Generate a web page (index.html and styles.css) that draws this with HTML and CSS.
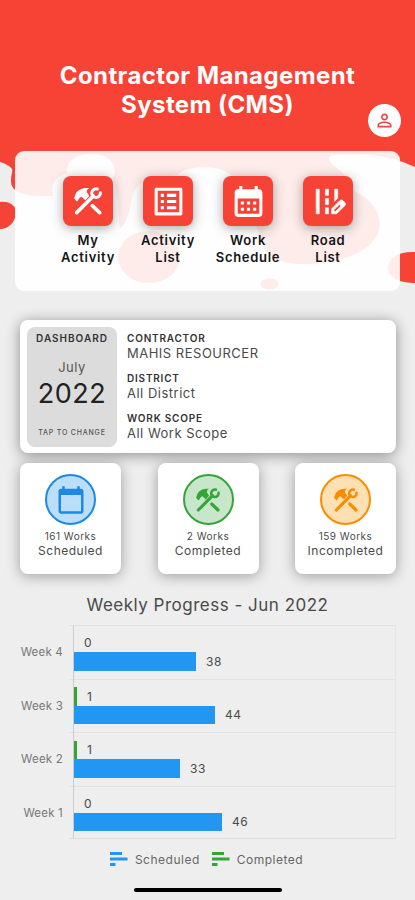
FILE: index.html
```
<!DOCTYPE html>
<html lang="en">
<head>
    <meta charset="UTF-8">
    <meta name="viewport" content="width=device-width, initial-scale=1.0">
    <title>Contractor Management System</title>
    <link rel="stylesheet" href="styles.css">
</head>
<body>
    <!-- Shared icons -->
    <svg class="sprite" width="0" height="0">
        <symbol id="tools" viewBox="0 0 84 84">
            <path d="M0 34L6 18Q18 1 46 3Q37 8 38 15L46 27L34 40L23 29Q17 30 15 35L9 44Z"/>
            <path d="M8 77L58 27M55 56L77 77" fill="none" stroke="currentColor" stroke-width="11" stroke-linecap="round"/>
            <path d="M70 6A13 13 0 1 0 79 17" fill="none" stroke="currentColor" stroke-width="9" stroke-linecap="round"/>
        </symbol>
        <symbol id="bars" viewBox="0 0 18 14">
            <path d="M0 0h12v3H0zM0 5.500h17.500v3H0zM0 11h5.500v3H0z"/>
        </symbol>
    </svg>

    <svg class="backdrop" viewBox="0 0 415 300">
        <path d="M0 0H415V167C405 163 400 160 385 157C365 154 335 153 329 157C328 162 335 167 343 173C350 184 352 192 360 194C375 203 382 217 379 230C373 255 330 265 300 264C280 263 268 258 263 246C255 225 245 180 228 173C215 165 190 166 180 173C175 178 160 176 150 178C135 183 132 195 130 208C128 218 124 226 120 228C118 215 118 190 113 180C120 160 104 154 91 154C75 154 65 163 67 173C54 178 50 185 53 196H35C20 195 10 190 11 180C11 174 13 172 12 169C9 165 4 163 0 162Z"/>
        <path d="M0 202C9 201 16 205 16 213C15 223 8 229 0 229Z"/>
        <path d="M415 252C402 251 388 256 388 268C389 279 402 283 415 283Z"/>
        <ellipse cx="149" cy="257" rx="31" ry="26"/>
        <ellipse cx="269.500" cy="284" rx="9" ry="5.500"/>
    </svg>

    <header class="header">
        <h1>Contractor Management<br>System (CMS)</h1>
        <button class="profile" aria-label="Profile">
            <svg viewBox="0 0 24 24"><path d="M12 5.900c1.160 0 2.100.940 2.100 2.100s-.940 2.100-2.100 2.100S9.900 9.160 9.900 8s.940-2.100 2.100-2.100m0 9c2.970 0 6.100 1.460 6.100 2.100v1.100H5.900V17c0-.640 3.130-2.100 6.100-2.100M12 4C9.790 4 8 5.790 8 8s1.790 4 4 4 4-1.790 4-4-1.790-4-4-4zm0 9c-2.670 0-8 1.340-8 4v3h16v-3c0-2.660-5.330-4-8-4z"/></svg>
        </button>
    </header>

    <nav class="menu">
        <a class="menu-item">
            <span class="tile"><svg class="tools"><use href="#tools"/></svg></span>
            My<br>Activity
        </a>
        <a class="menu-item">
            <span class="tile"><svg viewBox="0 0 24 24"><path d="M19 5v14H5V5h14m1.100-2H3.900c-.5 0-.9.4-.9.9v16.200c0 .4.4.9.9.9h16.200c.4 0 .9-.5.9-.9V3.900c0-.5-.5-.9-.9-.9zM11 7h6v2h-6V7zm0 4h6v2h-6v-2zm0 4h6v2h-6zM7 7h2v2H7zm0 4h2v2H7zm0 4h2v2H7z"/></svg></span>
            Activity<br>List
        </a>
        <a class="menu-item">
            <span class="tile"><svg viewBox="0 0 24 24"><path d="M19 4h-1V2h-2v2H8V2H6v2H5c-1.110 0-1.990.9-1.990 2L3 20c0 1.100.890 2 2 2h14c1.100 0 2-.9 2-2V6c0-1.100-.9-2-2-2zm0 16H5V10h14v10zM9 14H7v-2h2v2zm4 0h-2v-2h2v2zm4 0h-2v-2h2v2zm-8 4H7v-2h2v2zm4 0h-2v-2h2v2zm4 0h-2v-2h2v2z"/></svg></span>
            Work<br>Schedule
        </a>
        <a class="menu-item">
            <span class="tile"><svg viewBox="0 0 24 24"><path d="M18 4h-2v7.900l2-2V4zM4 4h2v16H4zM10 4h2v4h-2zM10 10h2v4h-2zM10 16h2v4h-2zM22.560 12.590l-1.150-1.150c-.590-.590-1.540-.590-2.120 0L14 16.730V20h3.270l5.290-5.290c.590-.590.590-1.540 0-2.120zM16.580 18.450h-1.030v-1.030L19 13.970l1.030 1.030-3.450 3.450z" stroke="currentColor" stroke-width=".4"/></svg></span>
            Road<br>List
        </a>
    </nav>

    <section class="dashboard">
        <div class="period">
            <b>DASHBOARD</b>
            <span class="month">July</span>
            <span class="year">2022</span>
            <small>TAP TO CHANGE</small>
        </div>
        <dl class="details">
            <dt>CONTRACTOR</dt>
            <dd>MAHIS RESOURCER</dd>
            <dt>DISTRICT</dt>
            <dd>All District</dd>
            <dt>WORK SCOPE</dt>
            <dd>All Work Scope</dd>
        </dl>
    </section>

    <section class="stats">
        <div class="stat">
            <span class="circle blue"><svg viewBox="0 0 24 24"><path d="M20 3h-1V1h-2v2H7V1H5v2H4c-1.100 0-2 .9-2 2v16c0 1.100.9 2 2 2h16c1.100 0 2-.9 2-2V5c0-1.100-.9-2-2-2zm0 18H4V8h16v13z"/></svg></span>
            <small>161 Works</small>
            <span>Scheduled</span>
        </div>
        <div class="stat">
            <span class="circle green"><svg class="tools"><use href="#tools"/></svg></span>
            <small>2 Works</small>
            <span>Completed</span>
        </div>
        <div class="stat">
            <span class="circle orange"><svg class="tools"><use href="#tools"/></svg></span>
            <small>159 Works</small>
            <span>Incompleted</span>
        </div>
    </section>

    <h2>Weekly Progress - Jun 2022</h2>
    <div class="chart">
        <div class="week">
            <span class="week-name">Week 4</span>
            <div class="plot">
                <div class="row"><span>0</span></div>
                <div class="row"><i class="bar scheduled" style="width: 122px"></i><span>38</span></div>
            </div>
        </div>
        <div class="week">
            <span class="week-name">Week 3</span>
            <div class="plot">
                <div class="row"><i class="bar completed" style="width: 3px"></i><span>1</span></div>
                <div class="row"><i class="bar scheduled" style="width: 141px"></i><span>44</span></div>
            </div>
        </div>
        <div class="week">
            <span class="week-name">Week 2</span>
            <div class="plot">
                <div class="row"><i class="bar completed" style="width: 3px"></i><span>1</span></div>
                <div class="row"><i class="bar scheduled" style="width: 106px"></i><span>33</span></div>
            </div>
        </div>
        <div class="week">
            <span class="week-name">Week 1</span>
            <div class="plot">
                <div class="row"><span>0</span></div>
                <div class="row"><i class="bar scheduled" style="width: 148px"></i><span>46</span></div>
            </div>
        </div>
    </div>
    <div class="legend">
        <svg class="legend-blue"><use href="#bars"/></svg><span>Scheduled</span>
        <svg class="legend-green"><use href="#bars"/></svg><span>Completed</span>
    </div>
    <div class="home-bar"></div>
</body>
</html>
```
FILE: styles.css
```
* {
  box-sizing: border-box;
}

body {
  margin: 0;
  height: 900px;
  display: flex;
  flex-direction: column;
  position: relative;
  overflow: hidden;
  background: #eeeeee;
  color: #4a4a4a;
  font-family: Inter, "Liberation Sans", sans-serif;
  letter-spacing: 0.5px;
}

svg {
  fill: currentColor;
}

.sprite {
  position: absolute;
}

/* Red splash behind the header and the menu */
.backdrop {
  position: absolute;
  top: 0;
  left: 0;
  width: 415px;
  height: 300px;
  color: #f64336;
  z-index: -1;
}

.header {
  height: 151px;
  padding-top: 61px;
  position: relative;
}

h1 {
  margin: 0;
  color: #fff;
  font-size: 24px;
  line-height: 29px;
  font-weight: 700;
  letter-spacing: 0.4px;
  text-align: center;
}

.profile {
  position: absolute;
  top: 104px;
  right: 14px;
  width: 33px;
  height: 33px;
  padding: 6px;
  border: 0;
  border-radius: 50%;
  background: #fff;
  color: #e5483e;
}

.profile svg {
  display: block;
  width: 21px;
  height: 21px;
}

.menu {
  height: 140px;
  margin: 0 15px;
  padding: 25px 33px 0;
  display: grid;
  grid-template-columns: repeat(4, 80px);
  background: rgba(255, 255, 255, 0.9);
  border-radius: 9px;
}

.menu-item {
  display: block;
  text-align: center;
  color: #151515;
  font-size: 13px;
  line-height: 17px;
  font-weight: 600;
  letter-spacing: 0.7px;
}

.tile {
  display: flex;
  align-items: center;
  justify-content: center;
  width: 50px;
  height: 50px;
  margin: 0 auto 6px;
  border-radius: 8px;
  background: #f64336;
  color: #fff;
  box-shadow: 0 2px 12px rgba(0, 0, 0, 0.35);
}

.tile svg {
  width: 37px;
  height: 37px;
}

.tile .tools {
  width: 28px;
  height: 28px;
}

/* Dashboard card */
.dashboard {
  height: 133px;
  margin: 29px 19px 0 20px;
  padding: 7px;
  display: flex;
  background: #fff;
  border-radius: 8px;
  box-shadow: 0 2px 14px rgba(0, 0, 0, 0.42);
}

.period {
  width: 90px;
  height: 120px;
  padding-top: 4px;
  display: flex;
  flex-direction: column;
  align-items: center;
  background: #dcdcdc;
  border-radius: 8px;
}

.period b {
  font-size: 10px;
  line-height: 14px;
  font-weight: 600;
  letter-spacing: 1px;
  color: #333;
}

.month {
  margin-top: 13px;
  font-size: 13px;
  line-height: 18px;
  color: #555;
}

.year {
  margin-top: 1px;
  font-size: 27px;
  line-height: 34px;
  color: #222;
}

.period small {
  margin-top: 16px;
  font-size: 7px;
  line-height: 12px;
  font-weight: 500;
  letter-spacing: 0.8px;
  color: #555;
}

.details {
  margin: 4px 0 0 10px;
}

dt {
  font-size: 10px;
  line-height: 14px;
  font-weight: 600;
  letter-spacing: 0.8px;
  color: #333;
}

dd {
  margin: 0 0 10px;
  font-size: 13px;
  line-height: 16px;
}

/* Works counters */
.stats {
  display: flex;
  gap: 36.5px;
  margin: 10px 0 0 20px;
}

.stat {
  width: 101px;
  height: 111px;
  padding-top: 11px;
  display: flex;
  flex-direction: column;
  align-items: center;
  background: #fff;
  border-radius: 8px;
  box-shadow: 0 2px 14px rgba(0, 0, 0, 0.34);
  font-size: 12px;
  line-height: 15px;
}

.stat small {
  font-size: 10px;
  line-height: 13px;
  margin-top: 5px;
}

.circle {
  display: flex;
  align-items: center;
  justify-content: center;
  width: 51px;
  height: 51px;
  border: 2px solid;
  border-radius: 50%;
}

.circle svg {
  width: 30px;
  height: 30px;
}

.circle .tools {
  width: 24px;
  height: 24px;
}

.blue {
  color: #1e88e5;
  background: #bbdefb;
}

.green {
  color: #35a53a;
  background: #c8e6c9;
}

.orange {
  color: #fb8c00;
  background: #ffe0b2;
}

/* Weekly chart */
h2 {
  margin: 20px 0 9px;
  font-size: 17px;
  line-height: 22px;
  font-weight: 400;
  text-align: center;
}

.chart {
  margin-right: 19px;
  background: linear-gradient(#dedede, #dedede) 69px 100% / 100% 1px no-repeat;
}

.week {
  display: flex;
  height: 53.5px;
  background: linear-gradient(#e2e2e2, #e2e2e2) 69px 0 / 100% 1px no-repeat;
}

.week-name {
  width: 73px;
  padding-right: 10px;
  font-size: 11.5px;
  line-height: 54px;
  text-align: right;
  letter-spacing: 0.2px;
  color: #777;
}

.plot {
  flex: 1;
  padding-top: 8.5px;
  border-left: 1px solid #ccc;
  border-right: 1px solid #e6e6e6;
}

.row {
  display: flex;
  align-items: center;
  height: 18.5px;
  font-size: 12px;
}

.row span {
  margin-left: 10px;
}

.bar {
  height: 100%;
}

.scheduled {
  background: #2196f3;
}

.completed {
  background: #35a53a;
}

.legend {
  display: flex;
  align-items: center;
  justify-content: center;
  gap: 7px;
  height: 20px;
  margin: 10px 2px 0 0;
  font-size: 12px;
  color: #666;
}

.legend svg {
  width: 18px;
  height: 14px;
}

.legend-blue {
  color: #2196f3;
}

.legend-green {
  color: #35a53a;
  margin-left: 5px;
}

.home-bar {
  width: 148px;
  height: 4px;
  margin: 19px auto 0;
  border-radius: 3px;
  background: #000;
}
```
